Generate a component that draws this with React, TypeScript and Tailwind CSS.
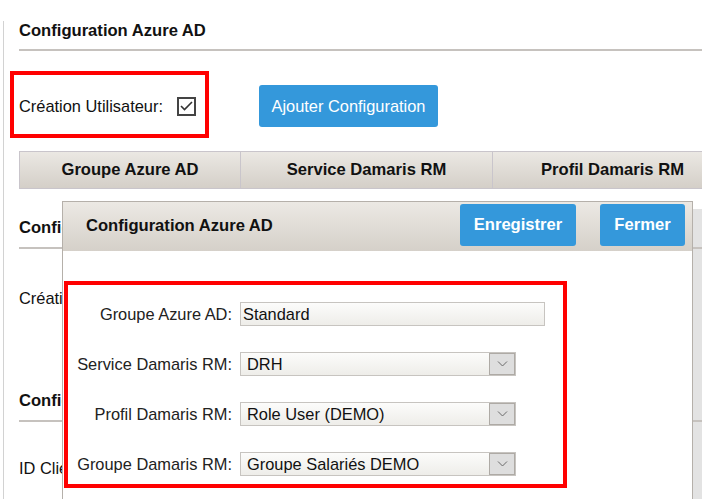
import React from 'react';

const Chevron: React.FC = () => (
  <svg width="11" height="6" viewBox="0 0 11 6" fill="none">
    <path d="M1 0.5 L5.5 5 L10 0.5" stroke="#6b6b6b" strokeWidth="1" />
  </svg>
);

const SelectBox: React.FC<{ value: string }> = ({ value }) => (
  <div className="flex h-[24px] w-[276px] border border-[#c7c4c0] bg-linear-to-b from-[#fcfcfb] to-[#eeede9]">
    <span className="flex-1 pl-[6px] leading-[22px] text-[#111]">{value}</span>
    <div className="flex h-full w-[26px] items-center justify-center border border-[#aeaaa5] bg-[#dedede]">
      <Chevron />
    </div>
  </div>
);

const Field: React.FC<{ label: string; children: React.ReactNode }> = ({ label, children }) => (
  <>
    <label className="flex items-center justify-end whitespace-nowrap text-[#222]">{label}</label>
    <div className="flex items-center">{children}</div>
  </>
);

const App: React.FC = () => {
  return (
    <div className="relative h-[499px] w-full overflow-hidden bg-white font-['Liberation_Sans',Arial,sans-serif] text-[16.4px] leading-[20px] text-[#111]">
      {/* shadow of the dialog, visible on the right edge */}
      <div className="absolute left-[692px] top-[209px] z-0 h-[300px] w-[20px] bg-[#e3e3e3]" />

      <div className="relative z-[1] ml-[3px] h-full border-l border-[#d2d2d2] pl-[15px]">
        <h2 className="mt-[21px] text-[16.6px] font-bold">Configuration Azure AD</h2>
        <div className="mt-[8px] h-[2px] bg-[#c6c2be]" />

        <div className="mt-[20px] flex items-start">
          <div className="-ml-[9px] flex h-[67px] w-[199px] items-center border-4 border-[#ff0000] pl-[5px] pt-[3px]">
            <span className="whitespace-nowrap">Création Utilisateur:</span>
            <span className="ml-[14px] flex h-[19px] w-[19px] items-center justify-center border-2 border-[#444]">
              <svg width="13" height="10" viewBox="0 0 13 10" fill="none">
                <path d="M1 5 L4.5 8.5 L12 1" stroke="#333" strokeWidth="1.6" />
              </svg>
            </span>
          </div>
          <button className="ml-[50px] mt-[14px] h-[42px] w-[179px] whitespace-nowrap rounded-[3px] bg-[#3498db] text-white">
            Ajouter Configuration
          </button>
        </div>

        <div className="mt-[13px] grid h-[38px] w-[720px] grid-cols-[220px_252px_1fr] border border-[#c9c5cb] bg-linear-to-b from-[#ebe8e3] to-[#d4cfc8] text-[16.6px] font-bold">
          <div className="flex items-center justify-center">Groupe Azure AD</div>
          <div className="flex items-center justify-center border-l border-[#c9c5cb]">Service Damaris RM</div>
          <div className="flex items-center justify-center border-l border-[#c9c5cb] pr-[6px]">Profil Damaris RM</div>
        </div>

        <h2 className="mt-[29px] text-[16.6px] font-bold">Configuration Azure AD</h2>
        <div className="mt-[9px] h-[2px] bg-[#c6c2be]" />
        <div className="mt-[39px]">Création Utilisateur:</div>

        <h2 className="mt-[83px] text-[16.6px] font-bold">Configuration Azure AD</h2>
        <div className="mt-[9px] h-[2px] bg-[#c6c2be]" />
        <div className="mt-[36px]">ID Client:</div>
      </div>

      <div className="absolute left-[62px] top-[201px] z-10 h-[320px] w-[631px] border border-[#b5b0aa] bg-white">
        <div className="flex h-[49px] items-start justify-between bg-linear-to-b from-[#ece9e4] to-[#d5d0c9] pl-[23px] pr-[7px]">
          <h3 className="mt-[14px] text-[16.6px] font-bold">Configuration Azure AD</h3>
          <div className="mt-[2px] flex gap-[24px]">
            <button className="h-[42px] w-[116px] rounded-[3px] bg-[#3498db] text-[16.6px] font-bold text-white">Enregistrer</button>
            <button className="h-[42px] w-[85px] rounded-[3px] bg-[#3498db] text-[16.6px] font-bold text-white">Fermer</button>
          </div>
        </div>

        <div className="ml-[1px] mt-[30px] h-[207px] w-[503px] border-4 border-[#ff0000] pt-[17px]">
          <div className="grid grid-cols-[164px_1fr] gap-x-[8px] gap-y-[26px]">
            <Field label="Groupe Azure AD:">
              <div className="h-[24px] w-[305px] border border-[#c7c4c0] bg-linear-to-b from-[#fcfcfb] to-[#eeede9] pl-[2px] leading-[22px]">
                Standard
              </div>
            </Field>
            <Field label="Service Damaris RM:">
              <SelectBox value="DRH" />
            </Field>
            <Field label="Profil Damaris RM:">
              <SelectBox value="Role User (DEMO)" />
            </Field>
            <Field label="Groupe Damaris RM:">
              <SelectBox value="Groupe Salariés DEMO" />
            </Field>
          </div>
        </div>
      </div>
    </div>
  );
};

export default App;
